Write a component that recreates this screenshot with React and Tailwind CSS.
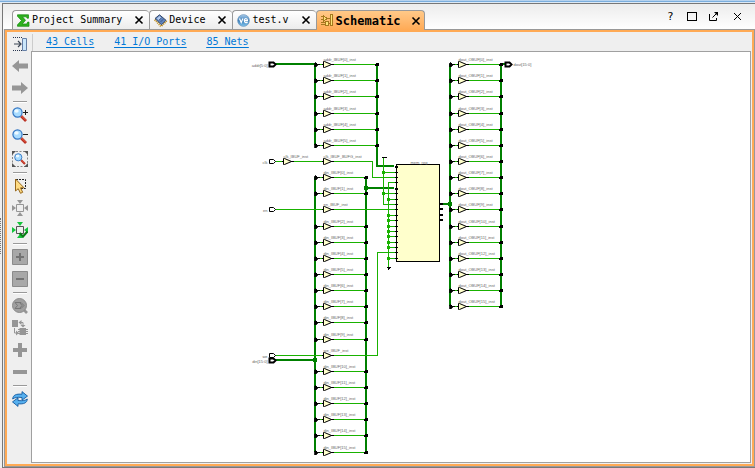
import React from "react";

const GREEN = "#19b200";
const BUS = "#008000";
const CELL = "#ffffcc";

function SigmaIcon() {
  return (
    <svg className="block h-[13px] w-[15px]" viewBox="0 0 15 13" aria-hidden="true">
      <path d="M.5.8h11v3.400h-1.400L9.400 2.800H5.500l3 3.500L5.200 10h4.500l1-1.900h1.300v4.200H.5v-1.500l4-4.300L.5 2.300Z" fill="#2fb21f" stroke="#138a0c" strokeWidth=".7" />
    </svg>
  );
}

function DeviceIcon() {
  return (
    <svg className="block h-[13px] w-[15px]" viewBox="0 0 15 13" aria-hidden="true">
      <path d="m.8 5.500 6.200 6.800 5.500-5.500" stroke="#c39225" strokeWidth="2.200" strokeDasharray="1.200 .8" fill="none" />
      <path d="M1 4.500 5.500.8 12 6.300 7.500 10.800Z" fill="#5f84bd" stroke="#2c3d5e" strokeWidth=".9" />
      <path d="M2.800 4.500 5.500 2l2 1.700-2.700 2.600Z" fill="#b4cbed" />
      <path d="m4.800 6.300 2.700-2.600M6.500 8l2.800-2.800" stroke="#344d7d" strokeWidth=".8" />
    </svg>
  );
}

function VerilogIcon() {
  return (
    <svg className="block h-[13px] w-[15px]" viewBox="0 0 15 13" aria-hidden="true">
      <defs>
        <linearGradient id="ball" x1="0" y1="0" x2="0" y2="1">
          <stop offset="0" stopColor="#a9cdec" />
          <stop offset=".5" stopColor="#3e7fb9" />
          <stop offset="1" stopColor="#7fc4ee" />
        </linearGradient>
      </defs>
      <circle cx="6.500" cy="6.500" r="5.900" fill="url(#ball)" stroke="#7299bd" strokeWidth=".7" />
      <path d="m2.500 4.500 1.700 4 1.700-4M7.300 6.600h3.200c0-2.700-3.200-2.700-3.200 0 0 2.500 2.400 2.300 3.200 1.400" fill="none" stroke="#fff" strokeWidth="1.200" />
    </svg>
  );
}

function SchematicIcon() {
  return (
    <svg className="block h-[13px] w-[15px]" viewBox="0 0 15 13" shapeRendering="crispEdges" aria-hidden="true">
      <path d="M0 2.500h3M0 5.500h3M6 4.500h3.500M0 10.500h5M0 8.500h5M8 9.500h2" stroke="#a5791d" fill="none" />
      <path d="M2.500 1.500 6 4.500 2.500 7.500ZM4.500 7.500h3v4h-3ZM9.500 .5h2v11h-2Z" fill="#ffe47a" stroke="#a5791d" />
    </svg>
  );
}

function CloseGlyph() {
  return (
    <svg className="block h-[10px] w-[10px]" viewBox="0 0 10 10" aria-hidden="true">
      <path d="m1.500 1.500 7 7m0-7-7 7" stroke="#000" strokeWidth="1.600" />
    </svg>
  );
}

const tabs = [
  { name: "Project Summary", icon: SigmaIcon },
  { name: "Device", icon: DeviceIcon },
  { name: "test.v", icon: VerilogIcon },
  { name: "Schematic", icon: SchematicIcon, active: true },
];

function Tab({ name, icon: Icon, active }) {
  return (
    <div
      className={
        active
          ? "z-10 -mb-px flex h-5 items-center rounded-t border-x border-t border-[#999] bg-gradient-to-b from-[#ffc988] to-[#ffaa55] pr-[3px] pl-1"
          : "flex h-[19px] items-center rounded-t border-t border-l border-[#999] bg-gradient-to-b from-white to-[#ececec] pr-[5px] pl-1"
      }
    >
      <button
        type="button"
        role="tab"
        aria-selected={!!active}
        className={active ? "flex items-center text-xs leading-4 font-bold" : "flex items-center text-[10px] leading-4"}
      >
        <Icon />
        {name}
      </button>
      <button type="button" aria-label={"Close " + name} className={active ? "ml-[10px]" : "ml-3"}>
        <CloseGlyph />
      </button>
    </div>
  );
}

function WindowButtons() {
  return (
    <div className="mb-[7px] ml-auto flex items-center gap-[10px] pr-[13px]">
      <button type="button" aria-label="Help" className="h-[11px] w-[10px] text-left text-[11px] leading-[11px]">?</button>
      <button type="button" aria-label="Maximize">
        <svg className="block h-[11px] w-[11px]" viewBox="0 0 11 11" shapeRendering="crispEdges">
          <path d="M.5 1.500h9v8h-9Z" fill="none" stroke="#000" />
        </svg>
      </button>
      <button type="button" aria-label="Float">
        <svg className="block h-[11px] w-[11px]" viewBox="0 0 11 11">
          <path d="M1.500 3v6.500h7V7M4.500 6.500 9 2" fill="none" stroke="#000" />
          <path d="M6 1h4v4Z" />
        </svg>
      </button>
      <button type="button" aria-label="Close panel" className="ml-1">
        <svg className="block h-[9px] w-[9px]" viewBox="0 0 9 9">
          <path d="m1 1 7 7m0-7-7 7" stroke="#000" />
        </svg>
      </button>
    </div>
  );
}

function Magnifier() {
  return (
    <>
      <path d="m9 9 5 5" stroke="#b52c20" strokeWidth="2.600" />
      <path d="m9.500 9 4.500 4.500" stroke="#f06547" strokeWidth="1" />
      <circle cx="5.500" cy="5.500" r="4.600" fill="#a8dcff" stroke="#3477c4" strokeWidth="1.200" />
      <ellipse cx="4.500" cy="4" rx="2.200" ry="1.800" fill="#eefaff" />
    </>
  );
}

function FitArrows({ color }) {
  return <path d="M8 4 5 0h6ZM8 12l-3 4h6ZM4 8 0 5v6ZM12 8l4-3v6Z" fill={color} />;
}

const tools = [
  {
    name: "Toggle side panel",
    art: (
      <>
        <path d="M1 1.500h9M1 14.500h9" stroke="#27354f" strokeDasharray="1 1" />
        <path d="M2 8h7M6 5l3 3-3 3" fill="none" stroke="#3c4654" strokeWidth="1.200" />
        <path d="M10.500 2.500h4v12h-4Z" fill="#cbe6fa" stroke="#657fa6" />
      </>
    ),
  },
  { name: "Back", art: <path d="M0 8 7 2v3.500h9v5H7V14Z" fill="#969696" /> },
  { name: "Forward", art: <path d="M16 8 9 2v3.500H0v5h9V14Z" fill="#969696" /> },
  null,
  { name: "Zoom in", art: <><Magnifier /><path d="M11 5.500h5M13.500 3v5" stroke="#222" /></> },
  { name: "Zoom out", art: <><Magnifier /><path d="M11 5.500h5" stroke="#222" /></> },
  {
    name: "Zoom fit",
    art: (
      <>
        <path d="M.5.5h15v15H.5Z" fill="none" stroke="#888" strokeDasharray="2 1.500" />
        <path d="M0 0h4L0 4ZM16 0v4l-4-4ZM0 16v-4l4 4ZM16 16h-4l4-4Z" fill="#555" />
        <g transform="translate(2 2) scale(.78)"><Magnifier /></g>
      </>
    ),
  },
  null,
  {
    name: "Select area",
    art: (
      <>
        <path d="M4 1.500h9.500v9H9" fill="none" stroke="#222" strokeDasharray="2 1" />
        <path d="M3.500 1v12l2.700-2.300 2.300 4.600 2.200-1-2.200-4.500h3.500Z" fill="#ffdc83" stroke="#98681c" />
      </>
    ),
  },
  {
    name: "Autofit selection",
    art: (
      <>
        <FitArrows color="#969696" />
        <path d="M4.500 4.500h7v7h-7Z" fill="#efefef" stroke="#969696" />
      </>
    ),
  },
  {
    name: "Fit selection",
    art: (
      <>
        <FitArrows color="#13c53b" />
        <path d="M4.500 4.500h7v7h-7Z" fill="#efefef" stroke="#555" />
        <path d="m7.500 11 3.500 3.500 4.500-5" fill="none" stroke="#087d16" strokeWidth="2.200" />
      </>
    ),
  },
  null,
  {
    name: "Expand cone",
    art: (
      <>
        <path d="M.5.5h15v15H.5Z" fill="#a8a8a8" stroke="#8b8b8b" />
        <path d="M4 8h8M8 4v8" stroke="#737373" strokeWidth="2" />
      </>
    ),
  },
  {
    name: "Collapse cone",
    art: (
      <>
        <path d="M.5.5h15v15H.5Z" fill="#a8a8a8" stroke="#8b8b8b" />
        <path d="M4 8h8" stroke="#737373" strokeWidth="2" />
      </>
    ),
  },
  null,
  {
    name: "Find",
    art: (
      <>
        <path d="m11 11 4 4" stroke="#969696" strokeWidth="2.600" />
        <circle cx="7.500" cy="7.500" r="7" fill="#a0a0a0" stroke="#8b8b8b" />
        <path d="M3 4.500h6l3 3-3 3H3l2.500-3ZM8 5l2 2.500L8 10" fill="none" stroke="#777" />
      </>
    ),
  },
  {
    name: "Regenerate",
    art: (
      <>
        <path d="M0 0h6v7H0ZM7.500 8h6.500v7H7.500Z" fill="#969696" />
        <path d="M7 2.500h4V6M2.500 8v5H6M6 9.500h10M6 11.500h10M6 13.500h10" fill="none" stroke="#969696" />
        <path d="m6.500 2.500 3-2.500v5ZM8.500 5h5L11 7.500ZM4 10.500l3 2.500-3 2.500Z" fill="#969696" />
      </>
    ),
  },
  { name: "Add", art: <path d="M1 8h14M8 1v14" stroke="#969696" strokeWidth="4" /> },
  { name: "Remove", art: <path d="M1 8h14" stroke="#969696" strokeWidth="4" /> },
  null,
  {
    name: "Reload",
    art: (
      <g fill="#56b0ef" stroke="#14599e" strokeWidth=".9">
        <path d="M.7 8C1 4 4 2.700 10 3.200V.6l5.500 4.500L10 9.200V6.500C5 6 3 6.500 .7 8Z" />
        <path d="M15.300 8C15 12 12 13.300 6 12.800v2.600L.5 10.900 6 6.800v2.700c5 .5 7 0 9.300-1.500Z" />
      </g>
    ),
  },
];

function Toolbar() {
  return (
    <div role="toolbar" aria-label="Schematic tools" className="flex w-6 shrink-0 flex-col items-center pt-px pl-[2px]">
      {tools.map((tool, i) =>
        tool ? (
          <button key={i} type="button" aria-label={tool.name} className="flex h-[22px] w-full items-center justify-center">
            <svg className="block h-4 w-4" viewBox="0 0 16 16">{tool.art}</svg>
          </button>
        ) : (
          <div key={i} className="flex h-[5px] w-[14px] flex-col justify-center">
            <div className="h-[2px] border-t border-[#999] bg-white" />
          </div>
        )
      )}
    </div>
  );
}

function Wire({ d }) {
  return <path d={d} fill="none" stroke={GREEN} />;
}

function Bus({ d }) {
  return <path d={d} fill="none" stroke={BUS} strokeWidth="2" transform="translate(-.5 -.5)" />;
}

function Label({ x, y, children, anchor = "start" }) {
  return (
    <text x={x} y={y} textAnchor={anchor} fontSize="4" fill="#666">{children}</text>
  );
}

function Node({ x, y, size = 3, color = GREEN }) {
  return <rect x={x - size / 2} y={y - size / 2} width={size} height={size} fill={color} />;
}

function Buffer({ x, y, name }) {
  return (
    <g>
      <path d={`M${x} ${y - 3}v6h1l7-3-7-3Z`} fill={CELL} stroke="#000" shapeRendering="auto" />
      <path d={`M${x - 2} ${y}h2M${x + 7} ${y}h3`} stroke="#000" />
      <Label x={x} y={y - 4}>{name}</Label>
    </g>
  );
}

function BusTap({ x, y, side }) {
  return side === "left" ? (
    <path d={`M${x - 1} ${y - 2}h1l2 2h2h-2l-2 2h-1Z`} stroke="#000" strokeWidth=".8" />
  ) : (
    <path d={`M${x + 1} ${y - 2}h-1l-2 1h-1v2h3l1 1Z`} />
  );
}

function BufferRow({ left, right, y, name }) {
  return (
    <g>
      <Wire d={`M${left} ${y}H${right}`} />
      <Buffer x={left + 8} y={y} name={name} />
      <BusTap x={left} y={y} side="left" />
      <BusTap x={right} y={y} side="right" />
    </g>
  );
}

function Port({ x, y, name, bold }) {
  return (
    <g>
      <path d={`M${x} ${y - 2}h4l2 2-2 2h-4Z`} fill="#fff" stroke="#000" strokeWidth={bold ? 2 : 1} shapeRendering="auto" />
      <Label x={x - 2} y={y + 2} anchor="end">{name}</Label>
    </g>
  );
}

const addrRows = [64, 80, 96, 113, 129, 145];
const dinRows = [177, 193, 226, 242, 258, 274, 290, 306, 322, 339, 371, 387, 403, 419, 435, 452];
const doutRows = [64, 80, 96, 113, 129, 145, 161, 177, 193, 209, 226, 242, 258, 274, 290, 306];
const pins = [166, 172, 177, 182, 188, 193, 199, 204, 209, 215, 220, 226, 231, 236, 242, 247, 252, 258];
const groundPins = [199, 215, 220, 226, 231, 236, 242, 247, 258];

function Schematic() {
  return (
    <svg
      className="block h-[410px] w-[718px] font-['Liberation_Sans',sans-serif]"
      viewBox="31.5 51.5 718 410"
      shapeRendering="crispEdges"
      role="img"
      aria-label="Netlist schematic"
    >
      <Bus d="M275 64H315M315 64V145M377 64V166H394" />
      <Bus d="M275 360H315M315 177V452M366 177V452M366 188H394" />
      <Bus d="M442 204H450M450 64V306M501 64V306M501 64H506" />

      <Wire d="M274 161H372V177H396M274 209H396M274 355H377V252H396" />
      <Wire d="M383 157V204H396M383 172H396M383 193H396" />
      <Wire d="M388 267V182H396" />
      {groundPins.map((y) => (
        <g key={y}>
          <Wire d={`M388 ${y}H396`} />
          <Node x={388} y={y} />
        </g>
      ))}
      <Node x={383} y={172} />
      <Node x={383} y={193} />
      <path d="M381 157h5" stroke="#000" />
      <path d="M386 266h5l-2 3h-1Z" />

      {addrRows.map((y, i) => <BufferRow key={y} left={315} right={377} y={y} name={`addr_IBUF[${i}]_inst`} />)}
      {dinRows.map((y, i) => <BufferRow key={y} left={315} right={366} y={y} name={`din_IBUF[${i}]_inst`} />)}
      {doutRows.map((y, i) => <BufferRow key={y} left={450} right={501} y={y} name={`dout_OBUF[${i}]_inst`} />)}
      <Buffer x={283} y={161} name="clk_IBUF_inst" />
      <Buffer x={323} y={161} name="clk_IBUF_BUFG_inst" />
      <Buffer x={323} y={209} name="en_IBUF_inst" />
      <Buffer x={323} y={355} name="we_IBUF_inst" />

      <Node x={365.5} y={187.5} size={4} color={BUS} />
      <Node x={314.5} y={359.5} size={4} color={BUS} />
      <Node x={449.5} y={203.5} size={4} color={BUS} />

      <Port x={269} y={64} name="addr[5:0]" bold />
      <Port x={269} y={161} name="clk" />
      <Port x={269} y={209} name="en" />
      <Port x={269} y={355} name="we" />
      <Port x={269} y={360} name="din[15:0]" bold />
      <path d="M505 62h4l2 2-2 2h-4Z" fill="#fff" stroke="#000" strokeWidth="2" shapeRendering="auto" />
      <Label x={513} y={65}>dout[15:0]</Label>

      <rect x="396" y="164" width="43" height="97" fill={CELL} stroke="#000" />
      {pins.map((y) => <path key={y} d={`M394 ${y}h3`} stroke="#000" strokeWidth={y === 166 || y === 188 ? 2 : 1} />)}
      {[204, 209, 215, 220].map((y) => <path key={y} d={`M439 ${y - 0.5}h3`} stroke="#000" strokeWidth="2" />)}
      <Label x={410} y={163}>mem_reg</Label>
    </svg>
  );
}

export default function App() {
  return (
    <div className="flex min-h-screen flex-col bg-[#efefef] font-['DejaVu_Sans_Mono',monospace] text-black">
      <div className="h-[3px] border-b border-[#dce9f6] bg-gradient-to-b from-[#d5e5f5] to-[#5b9bd5]" />
      <div className="flex grow">
        <div className="flex w-[2px] flex-col justify-center">
          <div className="h-9 w-px border-l border-dotted border-[#777]" />
        </div>
        <div className="flex min-w-0 grow flex-col border-t border-b border-l border-[#777] bg-[#efefef]">
          <div className="flex h-[25px] items-end bg-gradient-to-b from-[#ececec] to-white pl-[9px]">
            <div role="tablist" className="flex items-end">
              {tabs.map((tab) => <Tab key={tab.name} {...tab} />)}
            </div>
            <WindowButtons />
          </div>
          <div className="ml-px flex grow border border-[#999]">
            <div className="flex min-w-0 grow border-2 border-[#ffaa55]">
              <Toolbar />
              <div className="flex min-w-0 grow flex-col">
                <nav className="flex h-[19px] items-center pt-px text-[10px] leading-4 text-[#0078d7]">
                  <div className="ml-px h-[17px] w-[14px] border-l border-[#ccc]" />
                  <div className="flex gap-5 underline underline-offset-2">
                    <a href="#cells">43 Cells</a>
                    <a href="#ports">41 I/O Ports</a>
                    <a href="#nets">85 Nets</a>
                  </div>
                </nav>
                <main className="mr-px mb-px grow overflow-hidden border border-[#a0a0a0] bg-white">
                  <Schematic />
                </main>
              </div>
            </div>
          </div>
        </div>
      </div>
    </div>
  );
}
